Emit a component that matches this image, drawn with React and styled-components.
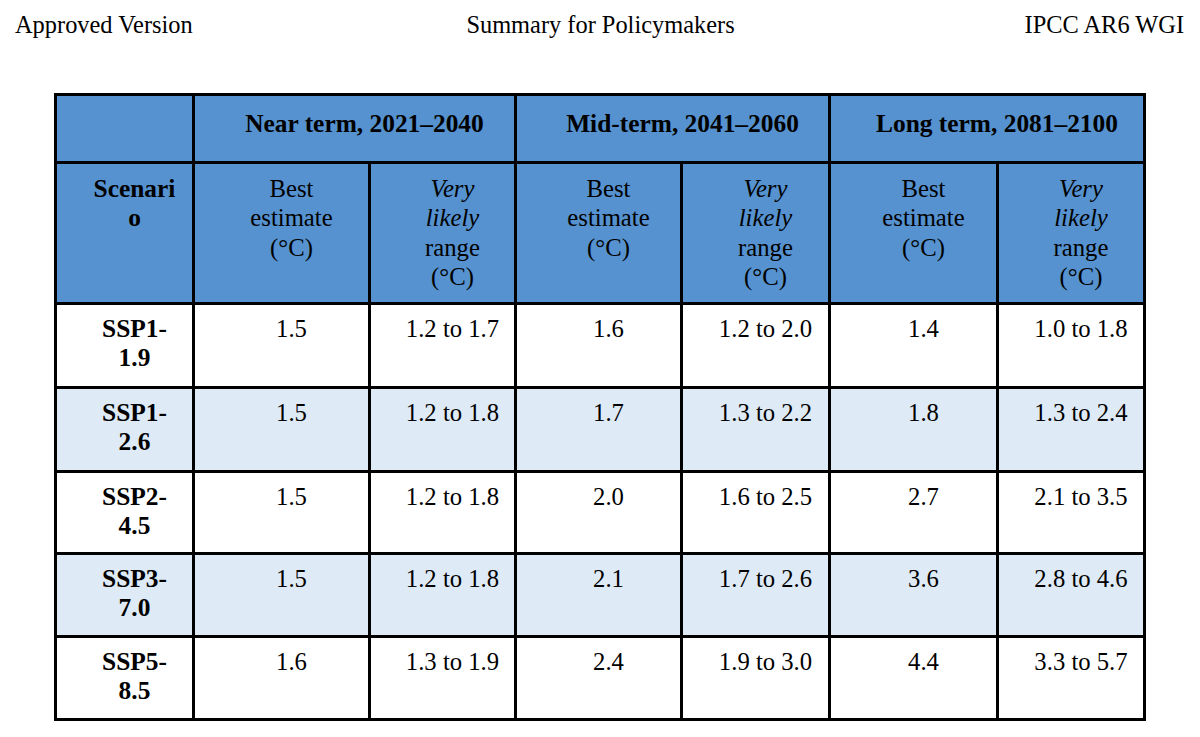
import React from "react";
import styled, { createGlobalStyle } from "styled-components";

const Global = createGlobalStyle`
  html, body { margin: 0; padding: 0; background: #ffffff; }
  body { font-family: "Liberation Serif", "Times New Roman", serif; color: #000; }
`;

const SERIF = `"Liberation Serif", "Times New Roman", serif`;

const Page = styled.div`
  width: 1200px;
  min-height: 737px;
  box-sizing: border-box;
  font-family: ${SERIF};
`;

const DocHeader = styled.header`
  display: grid;
  grid-template-columns: 1fr auto 1fr;
  padding: 11px 16px 0 15px;
  font-size: 24.4px;
  line-height: 27px;
`;

const HeadLeft = styled.div`
  justify-self: start;
`;
const HeadCenter = styled.div`
  justify-self: center;
  padding-left: 2px;
`;
const HeadRight = styled.div`
  justify-self: end;
`;

const Table = styled.table`
  margin: 55px auto 0;
  width: 1092px;
  table-layout: fixed;
  border-collapse: separate;
  border-spacing: 0;
  border-left: 3px solid #000;
  border-top: 3px solid #000;
  font-family: ${SERIF};
  font-size: 24.7px;
  line-height: 29.3px;
  color: #000;
`;

const Row = styled.tr`
  height: ${(p) => p.$h}px;
  background: ${(p) => p.$bg};
`;

const Cell = styled.td`
  box-sizing: border-box;
  border-right: 3px solid #000;
  border-bottom: 3px solid #000;
  padding: ${(p) => p.$pt ?? 9}px 13px 0 33px;
  vertical-align: top;
  text-align: center;
  font-family: ${SERIF};
  font-size: ${(p) => (p.$bold ? "25.4px" : "24.7px")};
  font-weight: ${(p) => (p.$bold ? 700 : 400)};
  overflow-wrap: normal;
`;

const HeadCell = styled(Cell).attrs({ as: "th" })`
  background: #5592cf;
`;

const Em = styled.i`
  font-style: italic;
`;

const HEADER_BLUE = "#5592cf";
const LIGHT = "#deeaf6";

const cols = [138, 176, 146, 166, 148, 168, 147];

const rows = [
  { s: "SSP1-1.9", v: ["1.5", "1.2 to 1.7", "1.6", "1.2 to 2.0", "1.4", "1.0 to 1.8"], h: 84 },
  { s: "SSP1-2.6", v: ["1.5", "1.2 to 1.8", "1.7", "1.3 to 2.2", "1.8", "1.3 to 2.4"], h: 84, shade: true },
  { s: "SSP2-4.5", v: ["1.5", "1.2 to 1.8", "2.0", "1.6 to 2.5", "2.7", "2.1 to 3.5"], h: 82 },
  { s: "SSP3-7.0", v: ["1.5", "1.2 to 1.8", "2.1", "1.7 to 2.6", "3.6", "2.8 to 4.6"], h: 83, shade: true },
  { s: "SSP5-8.5", v: ["1.6", "1.3 to 1.9", "2.4", "1.9 to 3.0", "4.4", "3.3 to 5.7"], h: 83 },
];

const periods = ["Near term, 2021–2040", "Mid-term, 2041–2060", "Long term, 2081–2100"];

export default function App() {
  return (
    <Page>
      <Global />
      <DocHeader>
        <HeadLeft>Approved Version</HeadLeft>
        <HeadCenter>Summary for Policymakers</HeadCenter>
        <HeadRight>IPCC AR6 WGI</HeadRight>
      </DocHeader>
      <Table>
        <colgroup>
          {cols.map((w, i) => (
            <col key={i} style={{ width: w }} />
          ))}
        </colgroup>
        <thead>
          <Row $h={68} $bg={HEADER_BLUE}>
            <HeadCell $pt={13} />
            {periods.map((p) => (
              <HeadCell key={p} colSpan={2} $bold $pt={13}>
                {p}
              </HeadCell>
            ))}
          </Row>
          <Row $h={141} $bg={HEADER_BLUE}>
            <HeadCell $bold $pt={10}>
              Scenari<wbr />o
            </HeadCell>
            {periods.map((p) => (
              <React.Fragment key={p}>
                <HeadCell $pt={10}>Best estimate (°C)</HeadCell>
                <HeadCell $pt={10}>
                  <Em>Very likely</Em> range (°C)
                </HeadCell>
              </React.Fragment>
            ))}
          </Row>
        </thead>
        <tbody>
          {rows.map((r) => (
            <Row key={r.s} $h={r.h} $bg={r.shade ? LIGHT : "#ffffff"}>
              <Cell $bold>{r.s}</Cell>
              {r.v.map((v, i) => (
                <Cell key={i}>{v}</Cell>
              ))}
            </Row>
          ))}
        </tbody>
      </Table>
    </Page>
  );
}
